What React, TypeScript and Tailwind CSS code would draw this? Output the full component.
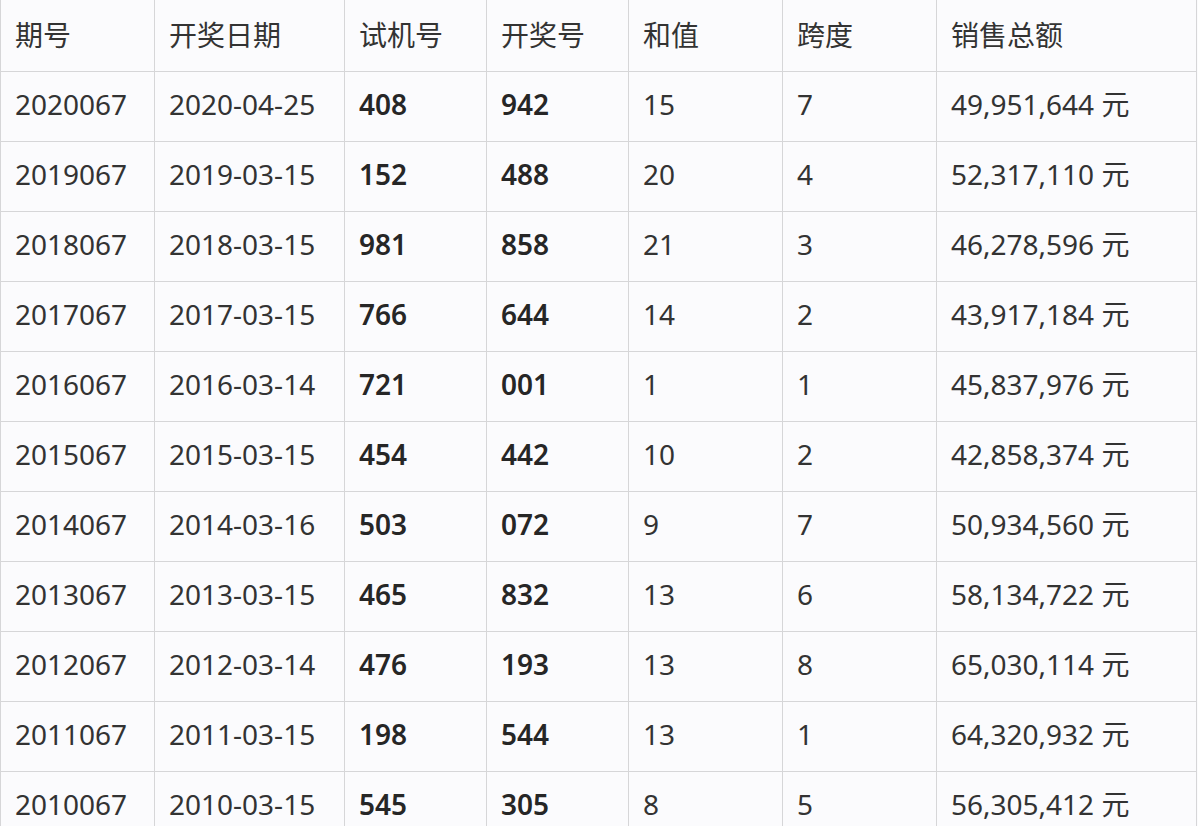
const rows = [
  ["2020067", "2020-04-25", "408", "942", "15", "7", "49,951,644 元"],
  ["2019067", "2019-03-15", "152", "488", "20", "4", "52,317,110 元"],
  ["2018067", "2018-03-15", "981", "858", "21", "3", "46,278,596 元"],
  ["2017067", "2017-03-15", "766", "644", "14", "2", "43,917,184 元"],
  ["2016067", "2016-03-14", "721", "001", "1", "1", "45,837,976 元"],
  ["2015067", "2015-03-15", "454", "442", "10", "2", "42,858,374 元"],
  ["2014067", "2014-03-16", "503", "072", "9", "7", "50,934,560 元"],
  ["2013067", "2013-03-15", "465", "832", "13", "6", "58,134,722 元"],
  ["2012067", "2012-03-14", "476", "193", "13", "8", "65,030,114 元"],
  ["2011067", "2011-03-15", "198", "544", "13", "1", "64,320,932 元"],
  ["2010067", "2010-03-15", "545", "305", "8", "5", "56,305,412 元"],
];

const headers = ["期号", "开奖日期", "试机号", "开奖号", "和值", "跨度", "销售总额"];

export default function App() {
  return (
    <div className="h-[826px] w-[1198px] overflow-hidden bg-[#fbfbfd] font-['Noto_Sans','Noto_Sans_CJK_SC',sans-serif] text-[28px] text-[#333]">
      <div className="grid w-[1197px] grid-cols-[154px_190px_142px_142px_154px_154px_260px] border-l border-[#d6d6d8]">
        {headers.map((h) => (
          <div
            key={h}
            className="flex h-[72px] items-center border-r border-b border-[#d6d6d8] pb-[2px] pl-[14px]"
          >
            {h}
          </div>
        ))}
        {rows.map((r) =>
          r.map((cell, i) => (
            <div
              key={r[0] + i}
              className={`flex h-[70px] items-center border-r border-b border-[#d6d6d8] pb-[5px] pl-[14px] ${
                i === 2 || i === 3 ? "font-semibold text-[#262626]" : ""
              }`}
            >
              {cell}
            </div>
          )),
        )}
      </div>
    </div>
  );
}
